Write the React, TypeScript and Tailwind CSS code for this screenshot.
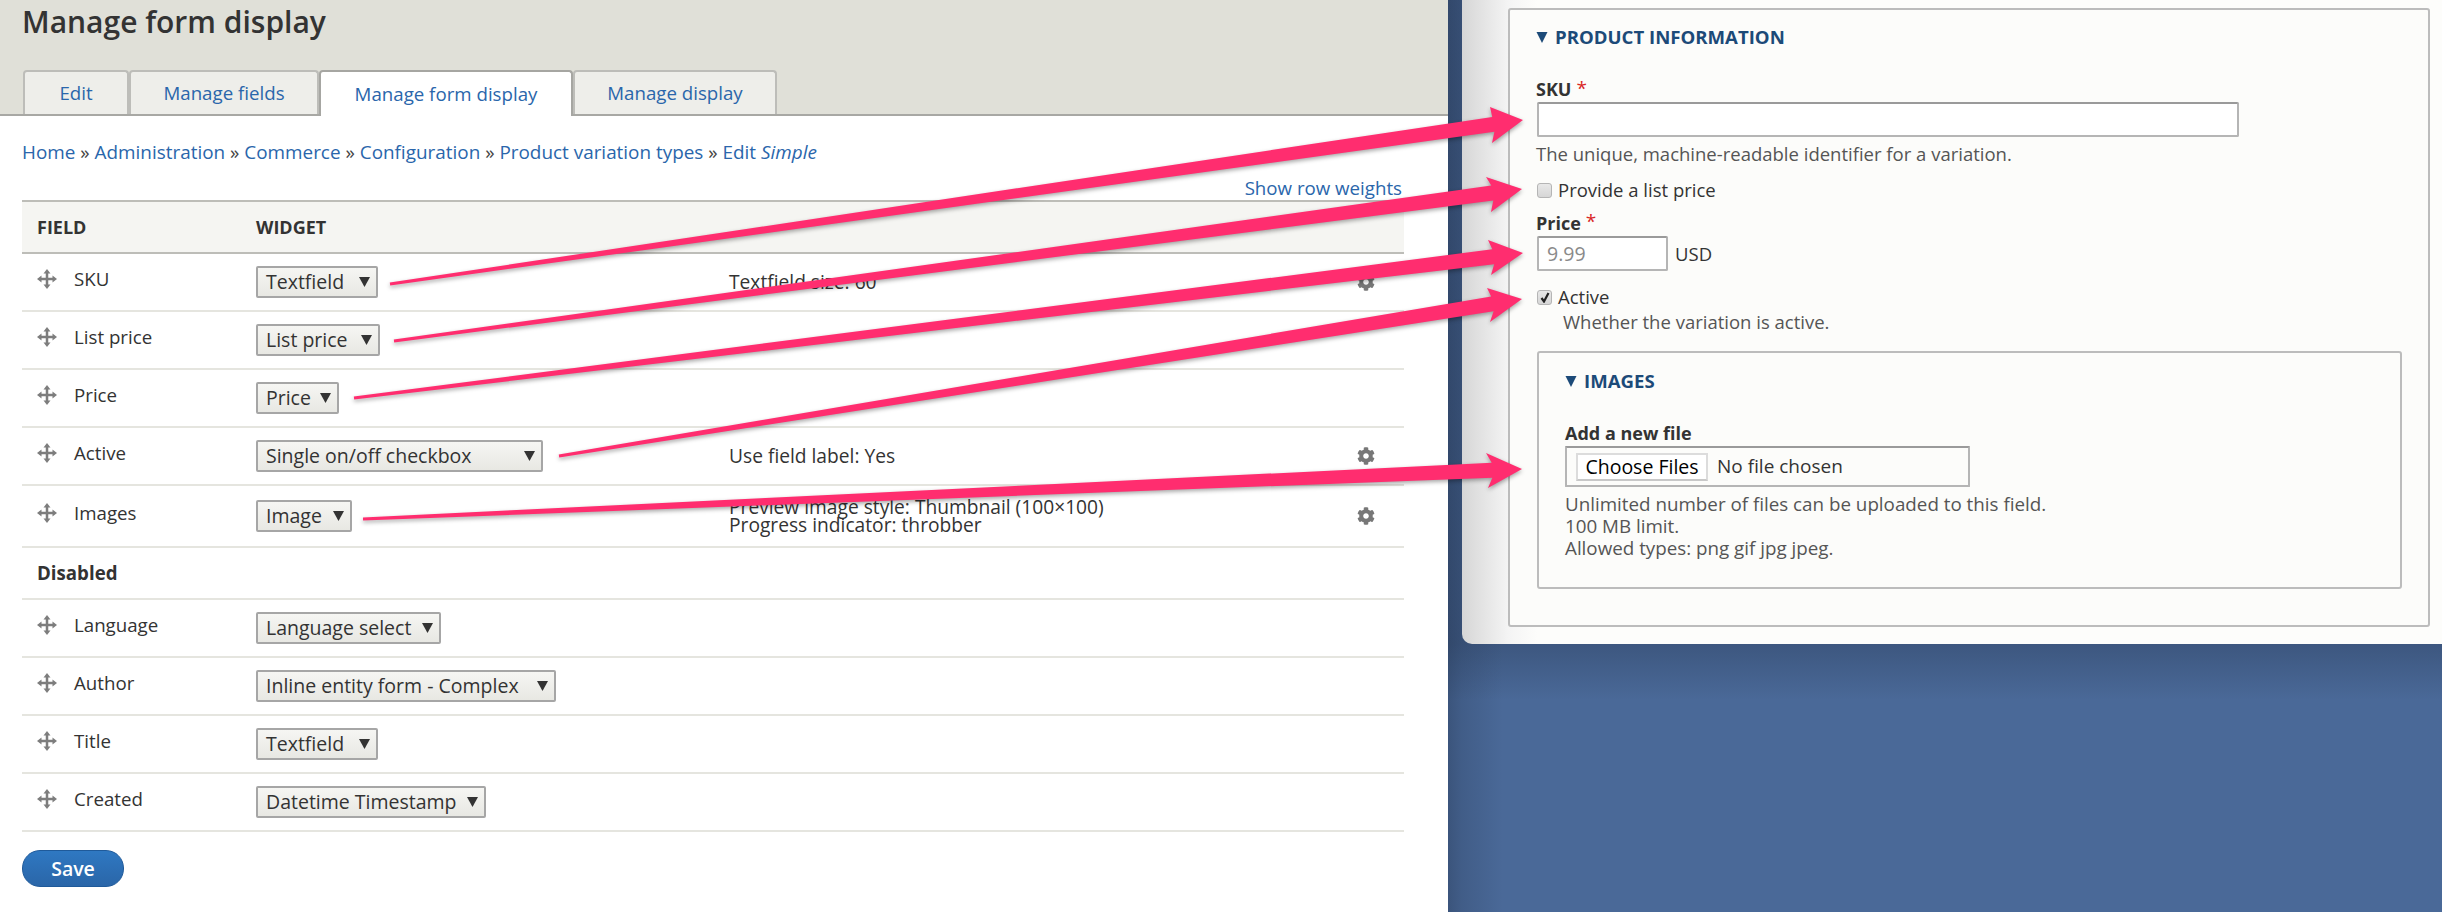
import React from 'react';
import { FaCog } from 'react-icons/fa';

const FONT = "font-['Open_Sans',sans-serif]";

interface FieldRow {
  name: string;
  widget: string;
  selectWidth: string;
  summary?: string[];
  gear?: boolean;
  tall?: boolean;
}

const ACTIVE_ROWS: FieldRow[] = [
  { name: 'SKU', widget: 'Textfield', selectWidth: 'w-[122px]', summary: ['Textfield size: 60'], gear: true },
  { name: 'List price', widget: 'List price', selectWidth: 'w-[124px]' },
  { name: 'Price', widget: 'Price', selectWidth: 'w-[83px]' },
  { name: 'Active', widget: 'Single on/off checkbox', selectWidth: 'w-[287px]', summary: ['Use field label: Yes'], gear: true },
  {
    name: 'Images',
    widget: 'Image',
    selectWidth: 'w-[96px]',
    summary: ['Preview image style: Thumbnail (100×100)', 'Progress indicator: throbber'],
    gear: true,
    tall: true,
  },
];

const DISABLED_ROWS: FieldRow[] = [
  { name: 'Language', widget: 'Language select', selectWidth: 'w-[185px]' },
  { name: 'Author', widget: 'Inline entity form - Complex', selectWidth: 'w-[300px]' },
  { name: 'Title', widget: 'Textfield', selectWidth: 'w-[122px]' },
  { name: 'Created', widget: 'Datetime Timestamp', selectWidth: 'w-[230px]' },
];

const ARROWS = [
  { tail: [390, 284], tip: [1523, 120], top: [1490, 107], bottom: [1492, 143] },
  { tail: [394, 341], tip: [1522, 189], top: [1486, 177], bottom: [1491, 212] },
  { tail: [354, 398], tip: [1523, 253], top: [1488, 240], bottom: [1491, 275] },
  { tail: [559, 456], tip: [1522, 299], top: [1487, 288], bottom: [1490, 322] },
  { tail: [363, 519], tip: [1522, 469], top: [1486, 453], bottom: [1488, 488] },
];

function arrowPoints(a: (typeof ARROWS)[number]) {
  const dx = a.tip[0] - a.tail[0];
  const dy = a.tip[1] - a.tail[1];
  const len = Math.hypot(dx, dy);
  const ux = dx / len;
  const uy = dy / len;
  const nx = -uy;
  const ny = ux;
  const cx = a.tip[0] - ux * 30;
  const cy = a.tip[1] - uy * 30;
  const pts = [
    [a.tail[0] - nx * 1.5, a.tail[1] - ny * 1.5],
    [cx - nx * 7.5, cy - ny * 7.5],
    a.top,
    a.tip,
    a.bottom,
    [cx + nx * 7.5, cy + ny * 7.5],
    [a.tail[0] + nx * 1.5, a.tail[1] + ny * 1.5],
  ];
  return pts.map((p) => `${p[0]},${p[1]}`).join(' ');
}

const DragIcon = () => (
  <svg width="20" height="20" viewBox="0 0 20 20" className="shrink-0 text-[#7d7d7d]" fill="currentColor">
    <rect x="8.75" y="3" width="2.5" height="14" />
    <rect x="3" y="8.75" width="14" height="2.5" />
    <polygon points="10,0 13.5,4.5 6.5,4.5" />
    <polygon points="10,20 13.5,15.5 6.5,15.5" />
    <polygon points="0,10 4.5,6.5 4.5,13.5" />
    <polygon points="20,10 15.5,6.5 15.5,13.5" />
  </svg>
);

const Triangle = () => (
  <svg width="12" height="12" viewBox="0 0 12 12" className="shrink-0 text-[#1c4a78]" fill="currentColor">
    <polygon points="0.5,1 11.5,1 6,12" />
  </svg>
);

const FakeSelect = ({ label, width }: { label: string; width: string }) => (
  <div
    className={`${width} h-8 flex items-center justify-between pl-[8px] pr-[6px] rounded-[2px] border-2 border-[#a6a6a6] bg-gradient-to-b from-[#f6f6f3] to-[#e8e8e3] text-[19.5px] text-[#333] whitespace-nowrap`}
  >
    <span>{label}</span>
    <svg width="11" height="10" viewBox="0 0 11 10" className="shrink-0" fill="#333">
      <polygon points="0,0 11,0 5.5,10" />
    </svg>
  </div>
);

const Row = ({ row }: { row: FieldRow }) => (
  <div className={`flex ${row.tall ? 'h-[62px]' : 'h-[58px]'} items-center border-b-2 border-[#e5e5df] text-[#333]`}>
    <div className="w-[234px] flex items-center gap-[17px] pl-[15px] -mt-[5px]">
      <DragIcon />
      <span>{row.name}</span>
    </div>
    <div className="w-[473px]">
      <FakeSelect label={row.widget} width={row.selectWidth} />
    </div>
    <div className="flex-1 leading-[18px] text-[19.2px]">
      {row.summary?.map((line) => (
        <div key={line}>{line}</div>
      ))}
    </div>
    {row.gear && <FaCog className="mr-[29px] text-[#777] text-[18px]" />}
  </div>
);

const Tab = ({ label, width, active }: { label: string; width: string; active?: boolean }) => (
  <div
    className={`${width} flex items-center justify-center rounded-t-[4px] border-2 border-b-0 ${
      active
        ? 'h-[46px] -mb-[2px] bg-white border-[#a6a6a2] text-[#2a66ab]'
        : 'h-[44px] bg-[#eeeeea] border-[#bdbdb9] text-[#2a66ab]'
    }`}
  >
    {label}
  </div>
);

const Req = () => <span className="text-[#d92626] align-top ml-[5px] text-[19px] leading-[20px] font-normal">*</span>;

const Checkbox = ({ checked }: { checked?: boolean }) => (
  <span className="w-[15px] h-[15px] shrink-0 flex items-center justify-center rounded-[3px] border border-[#b5b5b5] bg-gradient-to-b from-[#e8e8e8] to-[#d6d6d6]">
    {checked && (
      <svg width="10" height="11" viewBox="0 0 10 11" fill="none" stroke="#222" strokeWidth="2.2">
        <path d="M1.5 6 L4 9.5 L8.5 1" />
      </svg>
    )}
  </span>
);

const ManageForm = () => (
  <div className="w-[1448px] h-full shrink-0 bg-white text-[18.7px]">
    <div className="h-[116px] bg-[#e0e0d8] border-b-2 border-[#a8a8a4] flex flex-col justify-between">
      <h1 className="pl-[22px] pt-[4px] text-[30px] leading-[36px] font-semibold text-[#333]">Manage form display</h1>
      <div className="flex items-end pl-[23px] gap-0">
        <Tab label="Edit" width="w-[106px]" />
        <Tab label="Manage fields" width="w-[190px]" />
        <Tab label="Manage form display" width="w-[254px]" active />
        <Tab label="Manage display" width="w-[204px]" />
      </div>
    </div>
    <div className="pl-[22px] pr-[44px]">
      <div className="pt-[22px] h-[60px] leading-[28px] text-[18.9px] text-[#2a66ab] whitespace-nowrap">
        Home <span className="text-[#444]">»</span> Administration <span className="text-[#444]">»</span> Commerce{' '}
        <span className="text-[#444]">»</span> Configuration <span className="text-[#444]">»</span> Product variation
        types <span className="text-[#444]">»</span> Edit <em>Simple</em>
      </div>
      <div className="h-[24px] leading-[24px] text-right pr-[2px] text-[#2a66ab]">Show row weights</div>
      <div className="h-[54px] flex items-center border-y-2 border-y-[#bdbdb8] bg-[#f5f5f2] font-bold text-[#333] text-[18px]">
        <div className="w-[234px] pl-[15px]">FIELD</div>
        <div>WIDGET</div>
      </div>
      {ACTIVE_ROWS.map((row) => (
        <Row key={row.name} row={row} />
      ))}
      <div className="h-[52px] flex items-center pl-[15px] border-b-2 border-[#e5e5df] font-bold text-[#333]">Disabled</div>
      {DISABLED_ROWS.map((row) => (
        <Row key={row.name} row={row} />
      ))}
      <button className="mt-[18px] w-[102px] h-[37px] rounded-[18px] border border-[#1f5a9a] bg-gradient-to-b from-[#2f78c2] to-[#2a66a8] text-white text-[19.5px] leading-none font-semibold">
        Save
      </button>
    </div>
  </div>
);

const ProductPanel = () => (
  <div className="h-[644px] rounded-bl-[10px] bg-[linear-gradient(to_right,#d6d6d6,#f4f4f4_46px,#fdfdfb_75px)] pl-[46px] pr-[12px] pt-[8px] text-[18.5px]">
    <div className="h-[619px] rounded-[3px] border-2 border-[#bcbcbc] bg-[#fcfcfa] pl-[26px] pt-[17px] text-[#333]">
      <div className="h-[20px] flex items-center gap-[7px] font-bold text-[#1c4a78] text-[18.6px] leading-none">
        <Triangle />
        PRODUCT INFORMATION
      </div>
      <div className="mt-[31px] h-[22px] leading-[22px] font-bold text-[18px]">
        SKU
        <Req />
      </div>
      <div className="mt-[2px] ml-[1px] w-[702px] h-[35px] rounded-[2px] border-2 border-[#b5b5b5] border-t-[#9a9a9a] bg-white" />
      <div className="mt-[5px] h-[24px] leading-[24px] text-[#555]">The unique, machine-readable identifier for a variation.</div>
      <div className="mt-[12px] h-[24px] flex items-center gap-[6px] ml-[1px]">
        <Checkbox />
        Provide a list price
      </div>
      <div className="mt-[9px] h-[24px] leading-[24px] font-bold text-[18px]">
        Price
        <Req />
      </div>
      <div className="mt-[1px] ml-[1px] flex items-center gap-[7px]">
        <div className="w-[131px] h-[35px] rounded-[2px] border-2 border-[#b5b5b5] border-t-[#9a9a9a] bg-white pl-[8px] leading-[31px] text-[19.5px] text-[#8a8a8a]">
          9.99
        </div>
        USD
      </div>
      <div className="mt-[14px] h-[24px] flex items-center gap-[6px] ml-[1px]">
        <Checkbox checked />
        Active
      </div>
      <div className="mt-[1px] ml-[27px] h-[24px] leading-[24px] text-[#555]">Whether the variation is active.</div>
      <div className="mt-[17px] ml-[1px] w-[865px] h-[238px] rounded-[3px] border-2 border-[#bcbcbc] pl-[26px] pt-[18px]">
        <div className="h-[20px] flex items-center gap-[7px] font-bold text-[#1c4a78] text-[18.6px] leading-none">
          <Triangle />
          IMAGES
        </div>
        <div className="mt-[30px] h-[24px] leading-[24px] font-bold text-[18px]">Add a new file</div>
        <div className="mt-[1px] w-[405px] h-[41px] rounded-[1px] border-2 border-[#b5b5b5] border-t-[#9a9a9a] bg-[#fcfcfa] pl-[9px] flex items-center gap-[9px] text-[19px]">
          <button className="w-[132px] h-[28px] bg-white border-2 border-[#dcdcdc] border-b-[#c8c8c8] text-black text-[19.5px] leading-none">
            Choose Files
          </button>
          No file chosen
        </div>
        <div className="mt-[6px] leading-[22px] text-[18.8px] text-[#555]">
          <div>Unlimited number of files can be uploaded to this field.</div>
          <div>100 MB limit.</div>
          <div>Allowed types: png gif jpg jpeg.</div>
        </div>
      </div>
    </div>
  </div>
);

export default function App() {
  return (
    <div className={`relative flex w-[2442px] h-[912px] overflow-hidden ${FONT}`}>
      <ManageForm />
      <div className="flex-1 pl-[14px] bg-[#4a6998] bg-[linear-gradient(to_right,rgba(30,45,70,0.35),rgba(30,45,70,0.2)_14px,rgba(30,45,70,0)_55px),linear-gradient(to_bottom,rgba(30,45,70,0.3)_644px,rgba(30,45,70,0)_700px)]">
        <ProductPanel />
      </div>
      <svg className="absolute inset-0 pointer-events-none drop-shadow-[0_2px_2px_rgba(0,0,0,0.35)]" width="2442" height="912">
        {ARROWS.map((a) => (
          <polygon key={a.tail[0]} points={arrowPoints(a)} fill="#ff2d6f" />
        ))}
      </svg>
    </div>
  );
}
